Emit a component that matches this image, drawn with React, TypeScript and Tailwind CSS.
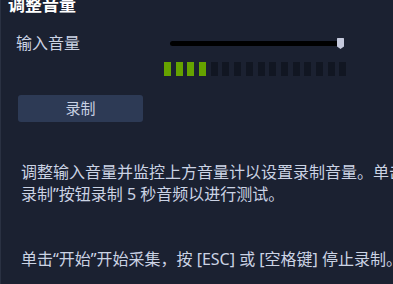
import React from 'react';

const font = '"Noto Sans", "Noto Sans CJK SC", sans-serif';

export default function App() {
  const level = 4;
  const bars = Array.from({ length: 16 }, (_, i) => i < level);

  return (
    <div
      className="w-[393px] h-[284px] overflow-hidden bg-[#1b2131] border-l border-[#2a3142] flex flex-col"
      style={{ fontFamily: font }}
    >
      {/* Title */}
      <h2 className="mt-[-5px] pl-[7px] text-[17px] leading-[20px] font-bold text-white whitespace-nowrap">
        调整音量
      </h2>

      {/* Input volume row */}
      <div className="mt-[17px] flex">
        <span className="w-[163px] shrink-0 pl-[15px] text-[16px] leading-[22px] text-[#cbd3e4]">
          输入音量
        </span>
        <div className="flex flex-col">
          <div className="h-[22px] flex items-center pl-[6px]">
            <div className="relative w-[170px] h-[5px] rounded-full bg-black">
              <svg
                className="absolute right-[-4px] top-[-3px]"
                width="7"
                height="11"
                viewBox="0 0 7 11"
              >
                <path d="M0 0.5 Q0 0 0.5 0 H6.5 Q7 0 7 0.5 V8.5 L3.5 11 L0 8.5 Z" fill="#c5c9dc" />
              </svg>
            </div>
          </div>
          <div className="mt-[8px] flex gap-[4.7px]">
            {bars.map((on, i) => (
              <div
                key={i}
                className={`w-[7px] h-[14px] ${on ? 'bg-[#66a300]' : 'bg-[#111622]'}`}
              />
            ))}
          </div>
        </div>
      </div>

      {/* Record button */}
      <div className="mt-[19px] pl-[17px]">
        <button className="w-[125px] h-[27px] rounded-[3px] bg-[#2d3a55] text-[15px] text-[#c9d1e3] flex items-center justify-center">
          录制
        </button>
      </div>

      {/* Help text */}
      <p className="mt-[39px] pl-[20px] text-[16px] leading-[22px] text-[#cbd3e4] whitespace-nowrap">
        调整输入音量并监控上方音量计以设置录制音量。单击“
        <br />
        录制”按钮录制 5 秒音频以进行测试。
      </p>

      <p className="mt-[43px] pl-[20px] text-[16px] leading-[22px] text-[#cbd3e4] whitespace-nowrap">
        单击“开始”开始采集，按 [ESC] 或 [空格键] 停止录制。
      </p>
    </div>
  );
}
